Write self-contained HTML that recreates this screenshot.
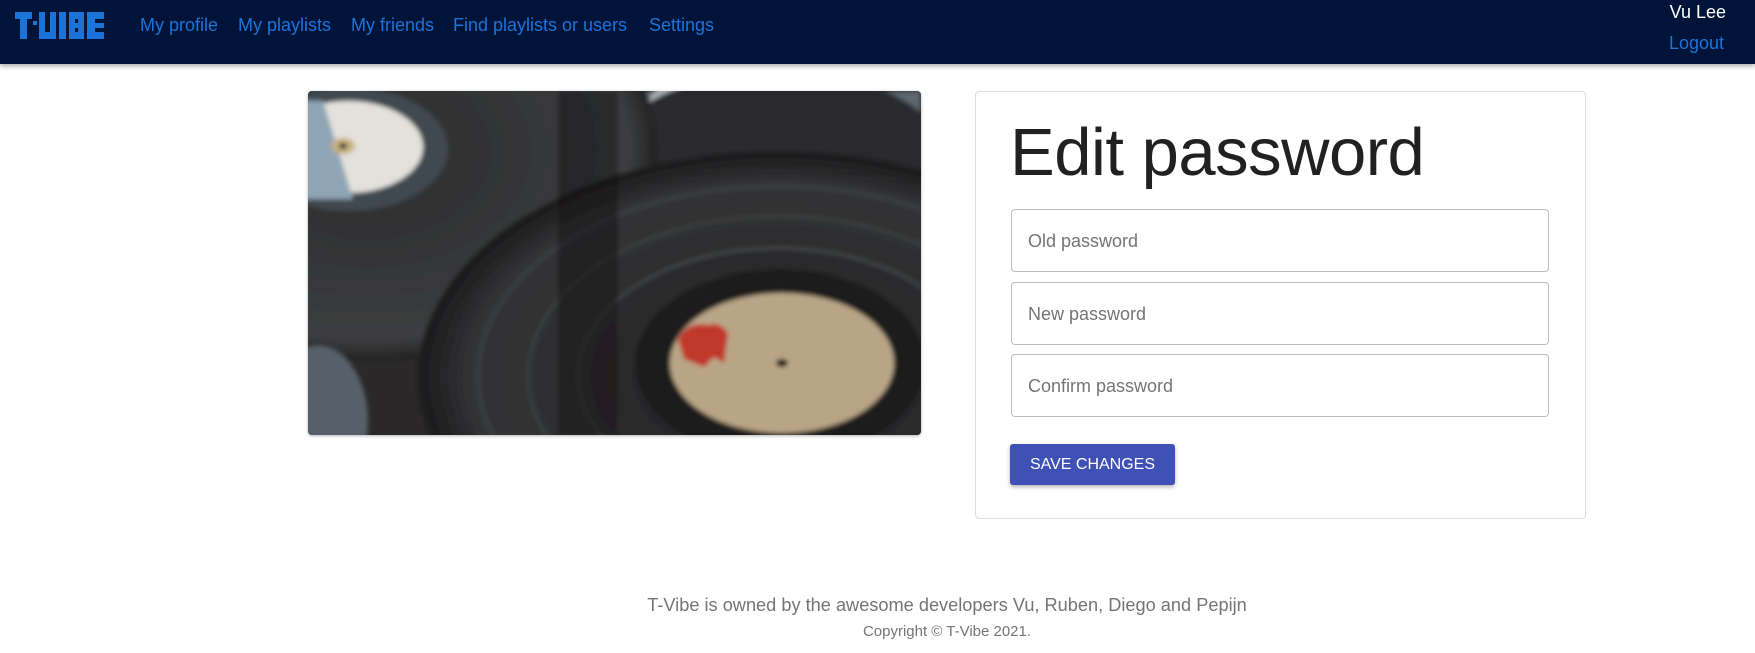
<!DOCTYPE html>
<html><head><meta charset="utf-8"><style>
*{box-sizing:border-box;margin:0;padding:0}
body{width:1755px;height:653px;background:#fff;font-family:"Liberation Sans",Arial,sans-serif;position:relative;overflow:hidden}
.hdr{position:absolute;left:0;top:0;width:1755px;height:64px;background:#00143a;box-shadow:0 2px 5px rgba(0,0,0,.35)}
.nav a{position:absolute;top:15px;font-size:18px;color:#1a73d9;text-decoration:none}
.user{position:absolute;right:29px;top:2px;color:#fff;font-size:18px}
.logout{position:absolute;right:31px;top:33px;color:#1a73d9;font-size:18px}
.img{position:absolute;left:308px;top:91px;width:613px;height:344px;border-radius:4px;overflow:hidden;box-shadow:0 1px 3px rgba(0,0,0,.3)}
.card{position:absolute;left:975px;top:91px;width:611px;height:428px;border:1px solid #ddd;border-radius:4px}
h1{position:absolute;left:1010px;top:114px;font-size:67px;font-weight:400;color:#212121;letter-spacing:-0.5px}
.in{position:absolute;left:1011px;width:538px;height:63px;border:1px solid #bdbdbd;border-radius:4px;font-size:18px;color:#757575;padding:21px 0 0 16px}
.btn{position:absolute;left:1010px;top:444px;width:165px;height:41px;background:#3f51b5;color:#fff;font-size:16px;border-radius:3px;text-align:center;line-height:41px;box-shadow:0 2px 4px rgba(0,0,0,.3)}
.f1{position:absolute;left:308px;width:1278px;text-align:center;top:595px;font-size:18.2px;color:#757575}
.f2{position:absolute;left:308px;width:1278px;text-align:center;top:623px;font-size:15px;color:#757575}
</style></head><body>
<div class="hdr">
<svg style="position:absolute;left:15px;top:12px" width="90" height="27" viewBox="0 0 90 27">
<g fill="#1a73d9">
<rect x="0" y="0" width="17" height="7"/><rect x="5" y="0" width="7" height="27"/>
<rect x="18" y="9" width="4" height="4"/>
<rect x="24" y="0" width="6" height="27"/><rect x="30" y="20" width="5" height="7"/><rect x="35" y="0" width="6" height="27"/>
<rect x="44" y="0" width="7" height="27"/>
<rect x="54" y="0" width="15" height="27"/>
<rect x="72" y="0" width="17" height="27"/>
</g>
<g fill="#00143a"><rect x="60" y="7" width="3" height="4"/><rect x="60" y="16" width="3" height="4"/><rect x="80" y="7" width="9" height="4"/><rect x="80" y="16" width="9" height="4"/></g>
</svg>
<div class="nav"><a style="left:140px">My profile</a><a style="left:238px">My playlists</a><a style="left:351px">My friends</a><a style="left:453px">Find playlists or users</a><a style="left:649px">Settings</a></div>
<div class="user">Vu Lee</div>
<div class="logout">Logout</div>
</div>
<div class="img">
<svg width="613" height="344" viewBox="0 0 613 344">
<defs><filter id="b"><feGaussianBlur stdDeviation="2.5"/></filter>
<radialGradient id="g1" cx=".5" cy=".5" r=".5"><stop offset="0" stop-color="#1f1e1e"/><stop offset=".85" stop-color="#333436"/><stop offset="1" stop-color="#1a1a1b"/></radialGradient>
<radialGradient id="g2" cx=".5" cy=".5" r=".5"><stop offset="0" stop-color="#2a2a2b"/><stop offset=".9" stop-color="#3c3e40"/><stop offset="1" stop-color="#222"/></radialGradient></defs>
<rect width="613" height="344" fill="#2a2829"/>
<g filter="url(#b)">
<rect x="300" y="0" width="313" height="110" fill="#5d6870"/>
<ellipse cx="430" cy="15" rx="90" ry="40" fill="#aab2b6"/>
<ellipse cx="470" cy="70" rx="170" ry="90" fill="#2a2b2d"/>
<ellipse cx="60" cy="60" rx="290" ry="210" fill="url(#g2)"/>
<ellipse cx="40" cy="58" rx="100" ry="62" fill="#3f4850"/>
<ellipse cx="40" cy="56" rx="75" ry="46" fill="#e3e1dc"/>
<path d="M-10 10 L15 10 L45 108 L-10 108Z" fill="#8fa5b5"/>
<ellipse cx="35" cy="55" rx="12" ry="8" fill="#c9b080"/>
<ellipse cx="35" cy="55" rx="4" ry="3" fill="#111"/>
<ellipse cx="10" cy="330" rx="50" ry="75" fill="#56616a"/>
<ellipse cx="470" cy="285" rx="360" ry="225" fill="url(#g1)"/>
<ellipse cx="470" cy="285" rx="300" ry="190" fill="none" stroke="#505357" stroke-width="1.2"/>
<ellipse cx="470" cy="285" rx="250" ry="160" fill="none" stroke="#505357" stroke-width="1.2"/>
<ellipse cx="470" cy="285" rx="200" ry="128" fill="none" stroke="#5a5d60" stroke-width="1.2"/>
<rect x="250" y="0" width="60" height="344" fill="#141111" opacity=".45"/>
<ellipse cx="472" cy="273" rx="145" ry="95" fill="#1b1b1b"/>
<ellipse cx="474" cy="272" rx="112" ry="70" fill="#b9a586"/>
<path d="M370 248 q10 -18 30 -14 q12 -4 20 8 l-4 30 l-10 -6 l-10 10 l-20 -8z" fill="#c0372b"/>
<ellipse cx="474" cy="272" rx="6" ry="4" fill="#111"/>
</g>
</svg>
</div>
<div class="card"></div>
<h1>Edit password</h1>
<div class="in" style="top:209px">Old password</div>
<div class="in" style="top:282px">New password</div>
<div class="in" style="top:354px">Confirm password</div>
<div class="btn">SAVE CHANGES</div>
<div class="f1">T-Vibe is owned by the awesome developers Vu, Ruben, Diego and Pepijn</div>
<div class="f2">Copyright © T-Vibe 2021.</div>
</body></html>
